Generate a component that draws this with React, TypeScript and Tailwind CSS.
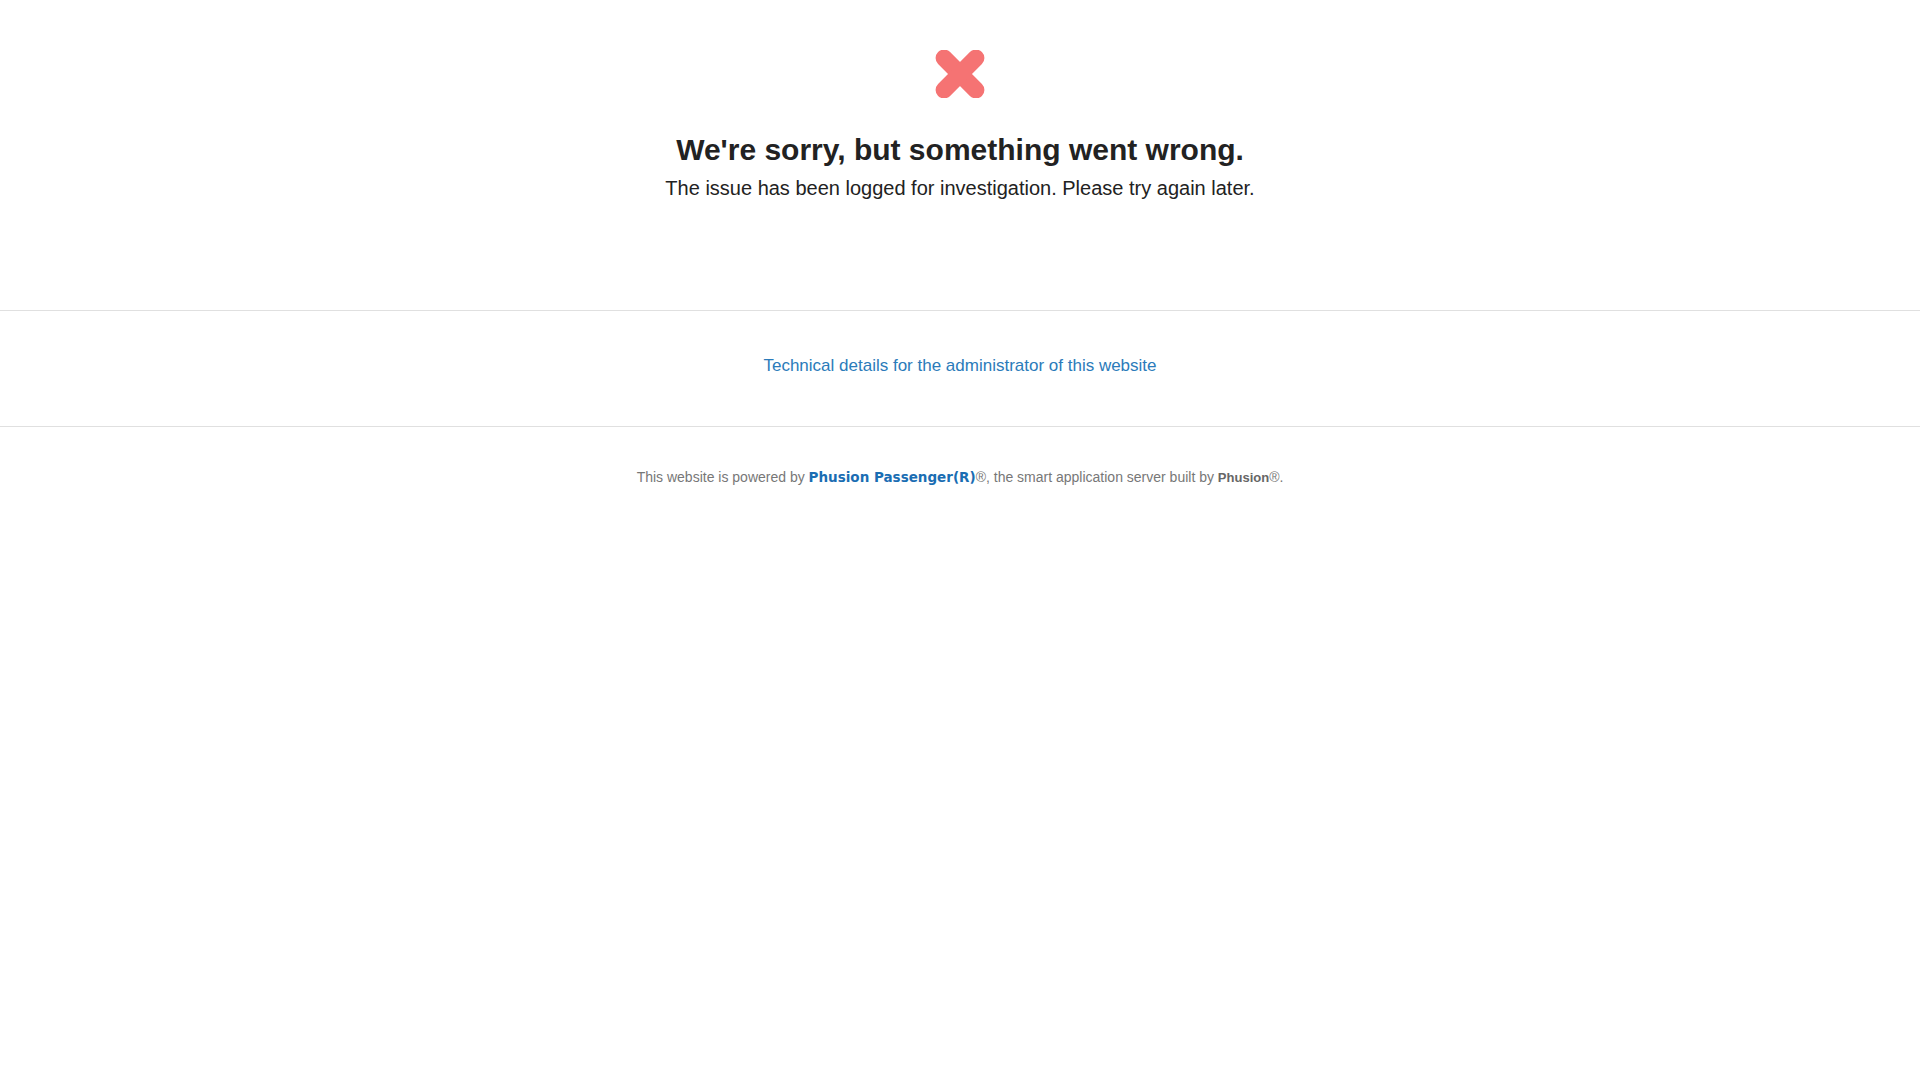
export default function App() {
  return (
    <div className="min-h-screen bg-white text-center font-['Liberation_Sans',Arial,sans-serif]">
      <div className="flex h-[310px] flex-col items-center pt-[50px]">
        <svg width="50" height="48" viewBox="0 0 50 48" aria-hidden="true">
          <g transform="translate(25 24) rotate(45)">
            <rect x="-31" y="-8.5" width="62" height="17" rx="8.5" fill="#f57373" />
            <rect x="-8.5" y="-31" width="17" height="62" rx="8.5" fill="#f57373" />
          </g>
        </svg>
        <h1 className="mt-[34px] text-[30px] leading-[36px] font-bold text-[#222]">
          We&apos;re sorry, but something went wrong.
        </h1>
        <p className="mt-[7px] text-[20px] leading-[26px] text-[#222]">
          The issue has been logged for investigation. Please try again later.
        </p>
      </div>
      <div className="flex h-[117px] items-center justify-center border-y border-[#e0e0e0] pb-[6px]">
        <a href="#" className="text-[17px] text-[#2b7bba]">
          Technical details for the administrator of this website
        </a>
      </div>
      <p className="mt-[41px] text-[14px] leading-[18px] text-[#777]">
        This website is powered by{' '}
        <a href="#" className="font-['DejaVu_Sans',Verdana,sans-serif] text-[13.5px] font-bold text-[#1a6db3]">
          Phusion Passenger(R)
        </a>
        ®, the smart application server built by{' '}
        <a href="#" className="text-[13px] font-bold text-[#666]">
          Phusion
        </a>
        ®.
      </p>
    </div>
  );
}
